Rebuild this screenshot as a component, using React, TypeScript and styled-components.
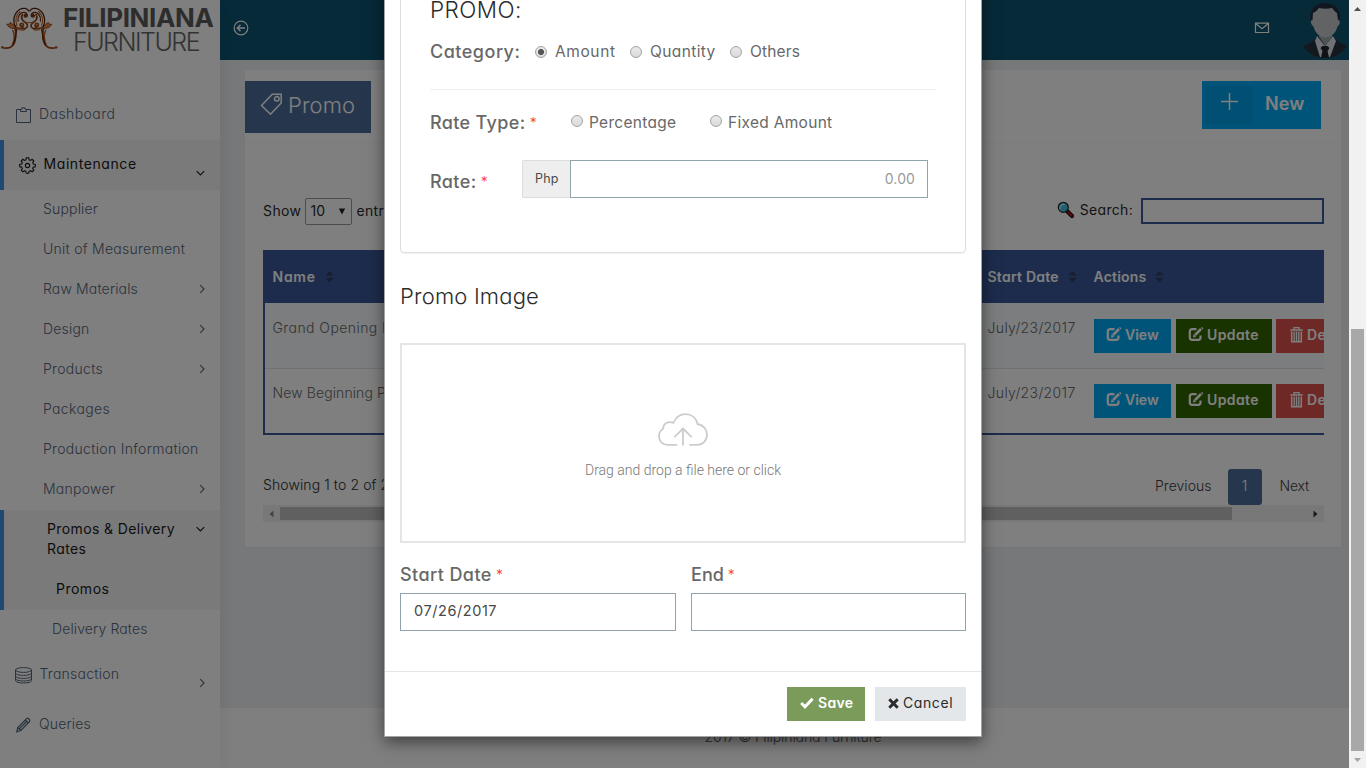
import React from 'react';
import styled, { createGlobalStyle, css } from 'styled-components';

const GlobalStyle = createGlobalStyle`
  * { box-sizing: border-box; }
  html, body { margin: 0; height: 768px; overflow: hidden; }
  body {
    font-family: Inter, "Open Sans", sans-serif;
    font-feature-settings: "cv11";
    font-size: 14px;
    font-weight: 300;
    line-height: 20px;
    color: #686868;
  }
  input, button { font: inherit; font-feature-settings: inherit; }
`;

const Screen = styled.div`
  display: flex;
  width: 1366px;
  height: 768px;
  overflow: hidden;
  position: relative;
`;

const Page = styled.div`
  width: 1349px;
  height: 768px;
  display: flex;
  background: #edf1f5;
`;

const T = styled.span<{ $ls?: number }>`
  letter-spacing: ${(p) => p.$ls ?? 0.3}px;
  white-space: pre;
`;

/* ---------- sidebar ---------- */

const Sidebar = styled.aside`
  width: 220px;
  height: 768px;
  flex: none;
  background: #fff;
  box-shadow: 1px 0 20px rgba(0, 0, 0, 0.08);
  z-index: 1;
  color: #54667a;
`;

const Brand = styled.div`
  height: 60px;
  display: flex;
  padding: 5px 0 0 0;
`;

const BrandText = styled.div`
  display: flex;
  flex-direction: column;
  padding: 0 0 0 4px;
`;

const BrandTop = styled.span`
  font-size: 26px;
  line-height: 25px;
  font-weight: 700;
  letter-spacing: -0.35px;
  color: #5a5a5a;
`;

const BrandBottom = styled.span`
  font-size: 25px;
  line-height: 25px;
  font-weight: 300;
  letter-spacing: -1.5px;
  padding-left: 10px;
  color: #666;
`;

const Menu = styled.nav`
  padding-top: 30px;
`;

const MenuItem = styled.div<{ $h?: number; $left: number; $active?: boolean }>`
  height: ${(p) => p.$h ?? 40}px;
  padding: ${(p) => (p.$h === 50 ? 14 : 9)}px 14px 0 ${(p) => p.$left}px;
  display: flex;
  ${(p) =>
    p.$active &&
    css`
      background: #f4f4f4;
      box-shadow: inset 4px 0 0 #4191e3;
      color: #1a1a1a;
      font-weight: 400;
    `}
`;

const MenuIcon = styled.span<{ $gap: number }>`
  display: flex;
  margin-right: ${(p) => p.$gap}px;
  padding-top: 3px;
`;

const ArrowSlot = styled.span<{ $drop?: boolean }>`
  margin-left: auto;
  display: flex;
  height: 20px;
  align-items: center;
  padding-top: ${(p) => (p.$drop ? 18 : 0)}px;
`;

const Arrow = ({ down }: { down?: boolean }) => (
  <svg width="11" height="10" viewBox="0 0 11 10" fill="none" stroke="currentColor" strokeWidth="1.1">
    {down ? <path d="M1.600 3.200 5.400 7l3.800-3.800" /> : <path d="M5.200 1.200 9 5 5.200 8.800" />}
  </svg>
);

const ClipboardIcon = () => (
  <svg width="16" height="17" viewBox="0 0 16 17" fill="none" stroke="currentColor">
    <path d="M4.5 2.5h-4v13h14v-13h-4M4.5 4.500v-2.300h1.500V.8h3v1.400h1.500v2.300z" />
  </svg>
);

const GearIcon = () => (
  <svg width="17" height="17" viewBox="0 0 17 17" fill="none" stroke="currentColor" strokeWidth="1.1">
    <path d="M7.300 .8h2.400l.4 2 1.400.6 1.700-1.100 1.600 1.700-1.100 1.600.6 1.500 2 .4v2.200l-2 .4-.6 1.500 1.100 1.600-1.600 1.700-1.700-1.200-1.400.6-.4 2H7.300l-.4-2-1.400-.6-1.700 1.200-1.600-1.700 1.100-1.600-.6-1.500-2-.4V7.500l2-.4.6-1.500-1.100-1.600 1.600-1.700 1.700 1.100 1.400-.6z" />
    <circle cx="8.500" cy="8.500" r="2.100" />
  </svg>
);

const StackIcon = () => (
  <svg width="18" height="17" viewBox="0 0 18 17" fill="none" stroke="currentColor">
    <ellipse cx="8.500" cy="3" rx="8" ry="2.400" />
    <path d="M.5 3v10.600c0 1.400 3.500 2.400 8 2.400s8-1 8-2.400V3M.5 6c0 1.400 3.500 2.400 8 2.400s8-1 8-2.400M.5 9c0 1.400 3.500 2.400 8 2.400s8-1 8-2.400M.5 11.600c0 1.400 3.500 2.400 8 2.400s8-1 8-2.400" />
  </svg>
);

const PencilIcon = () => (
  <svg width="16" height="16" viewBox="0 0 16 16" fill="none" stroke="currentColor" strokeWidth="1.200">
    <path d="M.8 14.800l1-4.300L10.600 1.600c1.200-1.200 4 1.400 2.900 2.900L4.800 13.500zM1.800 10.500l3 3M9.300 3l3 3M3.500 11.700l7-7.200" />
  </svg>
);

const Ornament = () => (
  <svg width="59" height="46" viewBox="0 5 59 46" fill="none" strokeLinecap="round">
    {[1, -1].map((dir) => (
      <g key={dir} transform={dir === 1 ? undefined : 'matrix(-1 0 0 1 58.500 0)'}>
        <path d="M14.500 27c2 5 1.800 14-1.800 18.500-2.500 3-6.500 3.200-10.700 2" stroke="#9a4514" strokeWidth="1.700" />
        <path d="M12.800 30.500c2.200 4 1.700 10.500-.5 14.500" stroke="#b9622b" strokeWidth="1.500" />
        <path d="M16.800 29c-1.300 5-.8 10.500-3.800 16" stroke="#6b2b0c" strokeWidth="1.500" />
        <circle cx="2.300" cy="47.200" r="1.200" fill="#b85a20" />
        <path d="M15.500 28.500c-3.500.5-7.500-1-8.700-4.500 1.500.7 2.800.3 3.200-1.500 1.500.5 3.500 2.500 5.500 3.500z" fill="#d98447" stroke="#8a3e14" strokeWidth="0.800" />
        <path d="M15.500 27c-3.500-7-1-14.500 4.500-17.700 3.300-1.900 7.300-1 8.700 1.700" stroke="#54220a" strokeWidth="1.300" />
        <path d="M16.800 25.500c-2-6-.3-11 3.200-14" stroke="#b9622b" strokeWidth="1.100" />
        <path d="M18 21c-.5-5 2.500-9 6.500-8.500 2.800.4 4 4 1.300 4.500-1.600.3-2.300-1.300-1-2.200" stroke="#6b2b0c" strokeWidth="1.300" />
        <circle cx="25.600" cy="15.200" r="1.300" fill="#7a340f" />
        <path d="M16.500 27.500c3.500 1.700 7 .5 7-2s-3.300-2.800-3.500-.5c0 1.300 1.500 1.500 1.800.5" stroke="#a8551f" strokeWidth="1.700" />
        <path d="M22 28.500c3 .8 5.500-.7 5.500-3s-3-3-5-5.500c-1.500-2-1-4 0-5.500" stroke="#8a3e14" strokeWidth="1.600" />
        <path d="M24.500 21.500c1.500 1.300 3 1.500 4.500 1M19 29.500c2 .8 4.500.8 6 0" stroke="#b9622b" strokeWidth="1.200" />
      </g>
    ))}
  </svg>
);

/* ---------- main column ---------- */

const Main = styled.div`
  flex: 1;
  min-width: 0;
  display: flex;
  flex-direction: column;
`;

const TopBar = styled.header`
  height: 60px;
  flex: none;
  background: #0e5573;
  display: flex;
  color: #fff;
  padding: 0 1px 0 13px;
`;

const TopIcon = styled.span<{ $top: number }>`
  display: flex;
  padding-top: ${(p) => p.$top}px;
`;

const TopRight = styled.div`
  margin-left: auto;
  display: flex;
  gap: 32px;
`;

const Avatar = () => (
  <svg width="46" height="60" viewBox="0 0 46 60">
    <path d="M1 46c5-2 10-4 14-9h17c4 5 9 7 13 9-5 8-13 12-22 12S6 54 1 46z" fill="#27303f" />
    <path d="M15 36l8 10 8-10 3 5-6 16h-10l-5-16z" fill="#dfe3e8" />
    <path d="M20.500 46h5l2 2-2 3 1.500 6.500h-8L20.500 51l-2-3z" fill="#1c2330" />
    <path d="M17 32h13v5l-6.500 9L17 37z" fill="#9ea6a8" />
    <path d="M9 22C6 12 11 4 23 3c13 1 17 9 14 19z" fill="#232c3f" />
    <path d="M11 13c3-1 4-3 6-5 4 1 9 1 13 0 2 2 3 4 5 5l1 7c3 0 2 5-.5 6.500C34 33 29 37.500 23.500 37.500S13 33 11.500 26.500C9 25 7.500 20 10.500 20z" fill="#c3c7cb" />
  </svg>
);

const Card = styled.section`
  margin: 10px 8px 0 25px;
  height: 477px;
  flex: none;
  background: #fff;
  box-shadow: 0 1px 0 #e6eaee;
`;

const CardHead = styled.div`
  height: 73px;
  display: flex;
  justify-content: space-between;
  padding: 11px 20px 0 0;
  border-bottom: 1px solid #f8f8f8;
`;

const TitleChip = styled.h3`
  margin: 0;
  width: 126px;
  height: 52px;
  background: #4c6e9b;
  color: #fff;
  display: flex;
  padding: 12px 0 0 15px;
  gap: 5px;
  font-size: 22px;
  line-height: 25px;
  font-weight: 300;
`;

const NewButton = styled.button`
  width: 119px;
  height: 48px;
  padding: 5px 0 0 3px;
  border: 0;
  background: #03a9f3;
  color: #fff;
  display: flex;
  gap: 12px;
  font-size: 18px;
  line-height: 36px;
  font-weight: 600;
`;

const NewIcon = styled.span`
  width: 48px;
  height: 38px;
  background: rgba(0, 0, 0, 0.05);
  display: flex;
  padding: 6px 0 0 15px;
`;

const CardBody = styled.div`
  padding: 55px 17px 0 18px;
`;

const Controls = styled.div`
  height: 52px;
  display: flex;
  align-items: flex-start;
  color: #2b2b2b;
  font-weight: 400;
  line-height: 26px;
`;

const LengthSelect = styled.span`
  width: 47px;
  height: 27px;
  margin: 0 4px 0 4px;
  border: 1px solid #999;
  border-radius: 2px;
  display: flex;
  align-items: center;
  justify-content: space-between;
  padding: 0 5px 1px 4px;
`;

const SearchBox = styled.label`
  margin-left: auto;
  display: flex;
  line-height: 24px;
`;

const LensSlot = styled.span`
  display: flex;
  padding-top: 3px;
  margin-right: 1px;
`;

const SearchInput = styled.input`
  width: 183px;
  height: 26px;
  margin-left: 8px;
  border: 2px solid #3b5998;
  background: transparent;
`;

const Table = styled.div`
  height: 185px;
  border-left: 2px solid #3b5998;
  border-bottom: 2px solid #3b5998;
  overflow: hidden;
`;

const HeadRow = styled.div`
  height: 53px;
  display: grid;
  grid-template-columns: 715px 106px 1fr;
  align-items: center;
  background: #3b5998;
  color: #fff;
  font-weight: 600;
`;

const HeadCell = styled.div`
  display: flex;
  align-items: center;
  gap: 9px;
  padding-left: 7.5px;
`;

const BodyRow = styled.div<{ $odd?: boolean }>`
  height: 65px;
  display: grid;
  grid-template-columns: 715px 106px 1fr;
  background: ${(p) => (p.$odd ? '#f7fafc' : '#fff')};
  box-shadow: ${(p) => (p.$odd ? 'none' : 'inset 0 1px 0 #dde2e8')};
`;

const Cell = styled.div`
  padding: 15px 0 0 7.5px;
  white-space: nowrap;
`;

const Actions = styled.div`
  padding: 16px 0 0 8px;
  display: flex;
`;

const ActionButton = styled.button<{ $bg: string; $w: number; $gap: number; $pad?: number }>`
  flex: none;
  width: ${(p) => p.$w}px;
  height: 34px;
  margin-right: ${(p) => p.$gap}px;
  padding: 0 0 3px ${(p) => p.$pad ?? 12}px;
  border: 0;
  background: ${(p) => p.$bg};
  color: #fff;
  font-weight: 600;
  display: flex;
  align-items: center;
  gap: 3px;
`;

const TableFoot = styled.div`
  height: 70px;
  display: flex;
  padding-top: 34px;
  color: #2b2b2b;
`;

const Info = styled.span`
  padding-top: 6px;
`;

const Pager = styled.div`
  margin-left: auto;
  display: flex;
  line-height: 34px;
  color: #3d3d3d;
  padding-right: 15px;
`;

const PageNumber = styled.span`
  width: 34px;
  height: 36px;
  margin: 0 18px 0 16px;
  border-radius: 3px;
  background: #4c6e9b;
  color: #fff;
  text-align: center;
`;

const HScroll = styled.div`
  height: 17px;
  background: #f1f1f1;
  display: flex;
  align-items: center;
  justify-content: space-between;
  padding: 0 6px;
`;

const HThumb = styled.div`
  width: 952px;
  height: 13px;
  margin-left: 6px;
  margin-right: auto;
  background: #c1c1c1;
`;

const PageFooter = styled.footer`
  margin-top: auto;
  height: 60px;
  background: #fff;
  text-align: center;
  padding: 19px 0 0 17px;
  color: #555;
`;

const SortIcon = () => (
  <svg width="9" height="12" viewBox="0 0 9 12" fill="#333c5c">
    <path d="M4.500 0 8.500 4.500h-8zM4.500 11.500l4-4.500h-8z" />
  </svg>
);

const TagIcon = () => (
  <svg width="23" height="23" viewBox="0 0 23 23" fill="none" stroke="currentColor" strokeWidth="1.500">
    <path d="M1.500 12.500 12.300 1.200h8.900v8.700L10.500 21.300z" />
    <circle cx="16.800" cy="5.800" r="2.300" />
  </svg>
);

const EditIcon = () => (
  <svg width="16" height="15" viewBox="0 0 16 15" fill="none" stroke="currentColor">
    <path d="M8.500 2.200H4.200C2.600 2.200 1.800 3 1.800 4.500v6c0 1.500.8 2.300 2.400 2.300h6c1.500 0 2.300-.8 2.300-2.300V8.500" strokeWidth="2.200" />
    <path d="M7 8.200 13 2" strokeWidth="2.600" />
    <path d="M5 10.500 5.500 7.300 8.200 9.800zM12.800.6l1.500-.4 1 1-.4 1.500z" fill="currentColor" stroke="none" />
  </svg>
);

const TrashIcon = () => (
  <svg width="14" height="16" viewBox="0 0 14 16" fill="none" stroke="currentColor">
    <path d="M.3 3h12.400M4 2.500v-2h5v2" strokeWidth="1.300" />
    <path d="M1.700 4.500v10.200h9.600V4.500" strokeWidth="1.500" />
    <path d="M4.200 4.500v10M6.500 4.500v10M8.800 4.500v10" strokeWidth="1.300" />
  </svg>
);

const LensIcon = () => (
  <svg width="18" height="18" viewBox="0 0 18 18">
    <path d="M10 10l5 5" stroke="#111" strokeWidth="4.200" strokeLinecap="round" />
    <path d="M11 11l4 4" stroke="#c0141c" strokeWidth="2" strokeLinecap="round" />
    <circle cx="6.300" cy="6.300" r="5" fill="#3ec3e6" stroke="#222" strokeWidth="1.200" />
    <path d="M3 8.500c-.5-3 1-5 4.500-5.300" stroke="#a4ecfa" strokeWidth="1.500" fill="none" />
  </svg>
);

/* ---------- overlay + modal ---------- */

const Scrim = styled.div`
  position: absolute;
  inset: 0 17px 0 0;
  background: rgba(0, 0, 0, 0.5);
  z-index: 5;
`;

const Modal = styled.div`
  position: absolute;
  z-index: 6;
  left: 384px;
  top: -21px;
  width: 598px;
  height: 758px;
  background: #fff;
  border: 1px solid #a2a4a6;
  box-shadow: 0 5px 15px rgba(0, 0, 0, 0.5);
`;

const ModalBody = styled.div`
  height: 691px;
  padding: 0 15px;
`;

const Panel = styled.div`
  height: 273px;
  padding: 15px 29px 0;
  border: 1px solid #ddd;
  border-radius: 4px;
  box-shadow: 0 1px 1px rgba(0, 0, 0, 0.05);
`;

const PanelTitle = styled.h3`
  margin: 0;
  height: 28px;
  font-size: 22.500px;
  line-height: 28px;
  font-weight: 300;
  color: #2b2b2b;
`;

const FieldRow = styled.div<{ $h: number }>`
  height: ${(p) => p.$h}px;
  display: flex;
  align-items: center;
`;

const FieldLabel = styled.label<{ $w?: number; $drop?: number }>`
  width: ${(p) => (p.$w ? p.$w + 'px' : 'auto')};
  padding-top: ${(p) => p.$drop ?? 0}px;
  flex: none;
  font-size: 18px;
  line-height: 24px;
  font-weight: 500;
  white-space: nowrap;
`;

const Star = styled.span`
  display: inline-block;
  margin-left: -1px;
  font-size: 14px;
  line-height: 14px;
  font-weight: 300;
  color: #f33;
  vertical-align: 1px;
`;

const Divider = styled.hr`
  margin: 11px 0 0;
  border: 0;
  height: 1px;
  background: #eee;
`;

const Radio = styled.span<{ $on?: boolean; $gap: number; $shift?: number }>`
  width: 12px;
  height: 12px;
  flex: none;
  margin: ${(p) => p.$shift ?? 0}px ${(p) => p.$gap}px 0 0;
  border: 1px solid #a3a3a3;
  border-radius: 50%;
  background: ${(p) => (p.$on ? 'radial-gradient(circle, #555 0 2.7px, transparent 3.3px), ' : '')}linear-gradient(#eaeaea, #dadada);
`;

const Option = styled.span<{ $w: number; $drop?: number }>`
  width: ${(p) => p.$w}px;
  padding-top: ${(p) => p.$drop ?? 0}px;
  flex: none;
  font-size: 15.500px;
  font-weight: 400;
  white-space: nowrap;
`;

const RateGroup = styled.div`
  display: flex;
  height: 38px;
  width: 406px;
`;

const Addon = styled.span`
  width: 48px;
  border: 1px solid #ddd;
  border-right: 0;
  border-radius: 2px 0 0 2px;
  background: #eee;
  font-size: 12.500px;
  font-weight: 400;
  line-height: 35px;
  padding-left: 12px;
  color: #4a4a4a;
`;

const TextInput = styled.input`
  flex: 1;
  min-width: 0;
  height: 38px;
  padding: 0 12px 1px 13px;
  border: 1px solid #90a4ae;
  border-radius: 0;
  background: #fff;
  color: #484848;
  font-weight: 400;
  outline: 0;
  &::placeholder {
    color: #999;
    text-align: right;
    letter-spacing: 0.1px;
  }
`;

const SectionTitle = styled.h3`
  margin: 28px 0 0;
  height: 62px;
  font-size: 22px;
  line-height: 30px;
  font-weight: 300;
  color: #2b2b2b;
`;

const DropZone = styled.div`
  height: 200px;
  border: 2px solid #e5e5e5;
  display: flex;
  flex-direction: column;
  align-items: center;
  padding-top: 68px;
  font-family: Roboto, sans-serif;
  font-size: 14px;
  line-height: 22px;
  color: #777;
`;

const DropText = styled.span`
  margin-top: 12px;
  white-space: nowrap;
`;

const Dates = styled.div`
  display: grid;
  grid-template-columns: 276px 275px;
  gap: 15px;
  padding-top: 20px;
`;

const DateField = styled.div`
  display: flex;
  flex-direction: column;
  gap: 6px;
`;

const DateInput = styled(TextInput)`
  flex: none;
  width: 100%;
  padding-bottom: 3px;
  font-size: 14.500px;
  letter-spacing: 0.57px;
`;

const ModalFoot = styled.div`
  height: 65px;
  border-top: 1px solid #e5e5e5;
  padding: 15px 15px 0;
  display: flex;
  justify-content: flex-end;
  gap: 10px;
`;

const FootButton = styled.button<{ $save?: boolean }>`
  width: ${(p) => (p.$save ? 78 : 91)}px;
  height: 34px;
  border: 0;
  padding: 0 0 2px 13px;
  display: flex;
  align-items: center;
  gap: 4px;
  background: ${(p) => (p.$save ? '#7b9b5b' : '#e4e7ea')};
  color: ${(p) => (p.$save ? '#fff' : '#2b2b2b')};
  font-weight: ${(p) => (p.$save ? 600 : 400)};
`;

/* ---------- window scrollbar ---------- */

const VScroll = styled.div`
  width: 17px;
  height: 768px;
  background: #f1f1f1;
  display: flex;
  flex-direction: column;
  align-items: center;
  justify-content: space-between;
  padding: 7px 0 6px;
`;

const VThumb = styled.div`
  width: 13px;
  height: 422px;
  margin-top: auto;
  margin-bottom: 7px;
  background: #a8a8a8;
`;

const CloudIcon = () => (
  <svg width="50" height="34" viewBox="0 0 51 34" preserveAspectRatio="none" fill="none" stroke="#ccc" strokeWidth="1.800">
    <path d="M19.500 31.800H10C4.500 31.800 1 28 1 23.200c0-3.500 1.500-5.800 4.300-7.400-.3-4.500 4.200-8 10.300-6C18.500 4 23 1.200 28 1.200c6.500 0 11 4.200 12.300 9.800C46 12 50 16 50 21.300c0 6-4.200 10.500-10 10.500h-8" />
    <path d="M25.500 32.500v-17M16.600 24.200l8.900-8.700 8.900 8.700" />
  </svg>
);

type Entry = { label: string; ls: number; arrow?: boolean };

const subItems: Entry[] = [
  { label: 'Supplier', ls: 0.17 },
  { label: 'Unit of Measurement', ls: 0.26 },
  { label: 'Raw Materials', ls: 0.15, arrow: true },
  { label: 'Design', ls: 0.2, arrow: true },
  { label: 'Products', ls: 0.3, arrow: true },
  { label: 'Packages', ls: 0.35 },
  { label: 'Production Information', ls: 0.31 },
  { label: 'Manpower', ls: 0.25, arrow: true },
];

const promos = [
  { name: 'Grand Opening Promo', ls: 0.43, date: 'July/23/2017' },
  { name: 'New Beginning Promo', ls: 0.1, date: 'July/23/2017' },
];

export default function App() {
  return (
    <>
      <GlobalStyle />
      <Screen>
        <Page>
          <Sidebar>
            <Brand>
              <Ornament />
              <BrandText>
                <BrandTop>FILIPINIANA</BrandTop>
                <BrandBottom>FURNITURE</BrandBottom>
              </BrandText>
            </Brand>
            <Menu>
              <MenuItem $h={50} $left={16}>
                <MenuIcon $gap={7}><ClipboardIcon /></MenuIcon>
                <T $ls={0.44}>Dashboard</T>
              </MenuItem>
              <MenuItem $h={50} $left={19} $active>
                <MenuIcon $gap={7.5}><GearIcon /></MenuIcon>
                <T $ls={0.58}>Maintenance</T>
                <ArrowSlot $drop><Arrow down /></ArrowSlot>
              </MenuItem>
              {subItems.map((item) => (
                <MenuItem key={item.label} $left={43}>
                  <T $ls={item.ls}>{item.label}</T>
                  {item.arrow && <ArrowSlot><Arrow /></ArrowSlot>}
                </MenuItem>
              ))}
              <MenuItem $h={60} $left={47} $active>
                <T $ls={0.38}>{'Promos & Delivery\nRates'}</T>
                <ArrowSlot><Arrow down /></ArrowSlot>
              </MenuItem>
              <MenuItem $left={56} $active><T $ls={0.5}>Promos</T></MenuItem>
              <MenuItem $left={52}><T $ls={0.12}>Delivery Rates</T></MenuItem>
              <MenuItem $h={50} $left={15}>
                <MenuIcon $gap={6.5}><StackIcon /></MenuIcon>
                <T $ls={0.25}>Transaction</T>
                <ArrowSlot $drop><Arrow /></ArrowSlot>
              </MenuItem>
              <MenuItem $h={50} $left={16}>
                <MenuIcon $gap={7}><PencilIcon /></MenuIcon>
                <T $ls={0.15}>Queries</T>
              </MenuItem>
            </Menu>
          </Sidebar>

          <Main>
            <TopBar>
              <TopIcon $top={20}>
                <svg width="16" height="16" viewBox="0 0 16 16" fill="none" stroke="currentColor" strokeWidth="1.200">
                  <circle cx="8" cy="8" r="6.800" />
                  <path d="M12 8H4.500M7.500 4.800 4.300 8l3.200 3.200" strokeWidth="1.500" />
                </svg>
              </TopIcon>
              <TopRight>
                <TopIcon $top={22}>
                  <svg width="16" height="12" viewBox="0 0 16 12" fill="none" stroke="currentColor" strokeWidth="1.200">
                    <path d="M1.500 1.200h13v9.300h-13zM2 1.800l6 5 6-5" />
                  </svg>
                </TopIcon>
                <Avatar />
              </TopRight>
            </TopBar>

            <Card>
              <CardHead>
                <TitleChip>
                  <TagIcon />
                  <T $ls={0.1}>Promo</T>
                </TitleChip>
                <NewButton>
                  <NewIcon>
                    <svg width="19" height="19" viewBox="0 0 19 19" stroke="currentColor" strokeWidth="1.500">
                      <path d="M1 9.500h17M9.500 1v17" />
                    </svg>
                  </NewIcon>
                  <T $ls={0.1}>New</T>
                </NewButton>
              </CardHead>
              <CardBody>
                <Controls>
                  <T $ls={0.4}>Show</T>
                  <LengthSelect>
                    10
                    <svg width="8" height="7" viewBox="0 0 8 7" fill="#222"><path d="M.8.5h6.400L4 6.500z" /></svg>
                  </LengthSelect>
                  <T $ls={0.3}>entries</T>
                  <SearchBox>
                    <LensSlot><LensIcon /></LensSlot>
                    <T $ls={0.3}> Search:</T>
                    <SearchInput aria-label="Search" />
                  </SearchBox>
                </Controls>
                <Table>
                  <HeadRow>
                    <HeadCell><T $ls={0.75}>Name</T><SortIcon /></HeadCell>
                    <HeadCell><T $ls={0.25}>Start Date</T><SortIcon /></HeadCell>
                    <HeadCell><T $ls={0.2}>Actions</T><SortIcon /></HeadCell>
                  </HeadRow>
                  {promos.map((promo, i) => (
                    <BodyRow key={promo.name} $odd={i === 0}>
                      <Cell><T $ls={promo.ls}>{promo.name}</T></Cell>
                      <Cell><T $ls={0.35}>{promo.date}</T></Cell>
                      <Actions>
                        <ActionButton $bg="#03a9f3" $w={77} $gap={5}><EditIcon /><T $ls={0}>View</T></ActionButton>
                        <ActionButton $bg="#336600" $w={96} $gap={4}><EditIcon /><T $ls={0.38}>Update</T></ActionButton>
                        <ActionButton $bg="#dd524c" $w={91} $gap={0} $pad={14}><TrashIcon /><T>Delete</T></ActionButton>
                      </Actions>
                    </BodyRow>
                  ))}
                </Table>
                <TableFoot>
                  <Info><T $ls={0.1}>Showing 1 to 2 of 2 entries</T></Info>
                  <Pager>
                    <T $ls={0.03}>Previous</T>
                    <PageNumber>1</PageNumber>
                    <T $ls={-0.2}>Next</T>
                  </Pager>
                </TableFoot>
                <HScroll>
                  <svg width="5" height="8" viewBox="0 0 5 8" fill="#888"><path d="M4.500.5v7L.5 4z" /></svg>
                  <HThumb />
                  <svg width="5" height="8" viewBox="0 0 5 8" fill="#333"><path d="M.5.5v7l4-3.500z" /></svg>
                </HScroll>
              </CardBody>
            </Card>

            <PageFooter><T $ls={-0.09}>2017 © Filipiniana Furniture</T></PageFooter>
          </Main>
        </Page>

        <VScroll>
          <svg width="7" height="4" viewBox="0 0 7 4" fill="#505050"><path d="M3.500 0 7 4H0z" /></svg>
          <VThumb />
          <svg width="7" height="4" viewBox="0 0 7 4" fill="#a3a3a3"><path d="M3.500 4 0 0h7z" /></svg>
        </VScroll>

        <Scrim />
        <Modal role="dialog">
          <ModalBody>
            <Panel>
              <PanelTitle><T $ls={0.45}>PROMO:</T></PanelTitle>
              <FieldRow $h={54}>
                <FieldLabel $w={105} $drop={2}><T $ls={0.5}>Category:</T></FieldLabel>
                <Radio $on $gap={8} $shift={2} />
                <Option $w={75} $drop={2}><T $ls={0.6}>Amount</T></Option>
                <Radio $gap={8} $shift={2} />
                <Option $w={80} $drop={2}><T $ls={0.38}>Quantity</T></Option>
                <Radio $gap={8} $shift={2} />
                <Option $w={60} $drop={2}><T $ls={0.15}>Others</T></Option>
              </FieldRow>
              <Divider />
              <FieldRow $h={66}>
                <FieldLabel $w={141}><T $ls={0.35}>Rate Type: </T><Star>*</Star></FieldLabel>
                <Radio $gap={6} $shift={-4} />
                <Option $w={121}><T $ls={0.3}>Percentage</T></Option>
                <Radio $gap={6} $shift={-4} />
                <Option $w={110}><T $ls={0.3}>Fixed Amount</T></Option>
              </FieldRow>
              <FieldRow $h={46}>
                <FieldLabel $w={92} $drop={6}><T $ls={0.4}>Rate: </T><Star>*</Star></FieldLabel>
                <RateGroup>
                  <Addon><T $ls={0.2}>Php</T></Addon>
                  <TextInput placeholder="0.00" />
                </RateGroup>
              </FieldRow>
            </Panel>
            <SectionTitle><T $ls={0.18}>Promo Image</T></SectionTitle>
            <DropZone>
              <CloudIcon />
              <DropText>Drag and drop a file here or click</DropText>
            </DropZone>
            <Dates>
              <DateField>
                <FieldLabel><T $ls={0.42}>Start Date </T><Star>*</Star></FieldLabel>
                <DateInput defaultValue="07/26/2017" />
              </DateField>
              <DateField>
                <FieldLabel><T $ls={0.05}>End </T><Star>*</Star></FieldLabel>
                <DateInput aria-label="End" />
              </DateField>
            </Dates>
          </ModalBody>
          <ModalFoot>
            <FootButton $save>
              <svg width="14" height="12" viewBox="0 0 14 12" fill="none" stroke="currentColor" strokeWidth="3"><path d="M1.200 6 5 9.800 12.600 1.800" /></svg>
              <T $ls={0.3}>Save</T>
            </FootButton>
            <FootButton>
              <svg width="11" height="11" viewBox="0 0 11 11" fill="none" stroke="currentColor" strokeWidth="3"><path d="M1.300 1.300l8.400 8.400M9.700 1.300 1.300 9.700" /></svg>
              <T $ls={0.6}>Cancel</T>
            </FootButton>
          </ModalFoot>
        </Modal>
      </Screen>
    </>
  );
}
